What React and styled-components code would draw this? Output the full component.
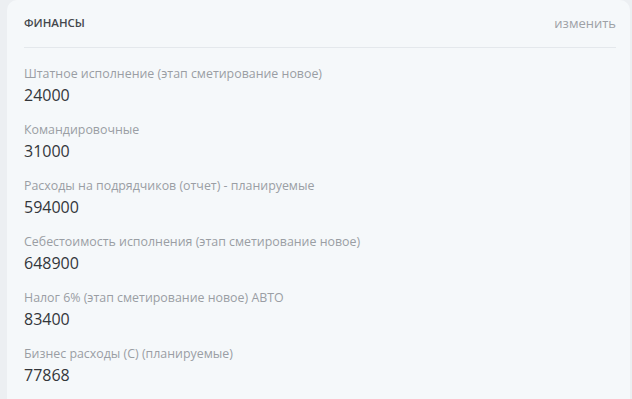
import React from 'react';
import styled, { createGlobalStyle } from 'styled-components';

const GlobalStyle = createGlobalStyle`
    html, body {
        margin: 0;
        padding: 0;
        background: #eceff2;
        font-family: "Open Sans", "Noto Sans", Arial, sans-serif;
    }
`;

const Page = styled.div`
    height: 399px;
    overflow: hidden;
    padding-left: 7px;
`;

const Card = styled.section`
    width: 623px;
    min-height: 420px;
    background: #f5f8fa;
    border-radius: 10px 10px 0 0;
    padding: 0 14px 0 17px;
    box-sizing: border-box;
`;

const Header = styled.header`
    height: 48px;
    display: flex;
    align-items: center;
    justify-content: space-between;
    border-bottom: 1px solid #e4e8ec;
    box-sizing: border-box;
    padding-bottom: 2px;
`;

const Title = styled.h2`
    margin: 0;
    font-size: 11.5px;
    font-weight: 600;
    color: #44474c;
`;

const EditLink = styled.a`
    font-size: 13px;
    color: #9da1a6;
    cursor: pointer;
`;

const List = styled.div`
    display: flex;
    flex-direction: column;
    gap: 14px;
    padding-top: 17px;
`;

const Field = styled.div`
    display: flex;
    flex-direction: column;
`;

const Label = styled.span`
    font-size: 12.4px;
    line-height: 18px;
    color: #9a9ea4;
`;

const Value = styled.span`
    font-size: 16px;
    line-height: 24px;
    color: #33363a;
`;

const items = [
    { label: 'Штатное исполнение (этап сметирование новое)', value: '24000' },
    { label: 'Командировочные', value: '31000' },
    { label: 'Расходы на подрядчиков (отчет) - планируемые', value: '594000' },
    { label: 'Себестоимость исполнения (этап сметирование новое)', value: '648900' },
    { label: 'Налог 6% (этап сметирование новое) АВТО', value: '83400' },
    { label: 'Бизнес расходы (С) (планируемые)', value: '77868' },
];

export default function App() {
    return (
        <>
            <GlobalStyle />
            <Page>
                <Card>
                    <Header>
                        <Title>ФИНАНСЫ</Title>
                        <EditLink>изменить</EditLink>
                    </Header>
                    <List>
                        {items.map((item) => (
                            <Field key={item.label}>
                                <Label>{item.label}</Label>
                                <Value>{item.value}</Value>
                            </Field>
                        ))}
                    </List>
                </Card>
            </Page>
        </>
    );
}
